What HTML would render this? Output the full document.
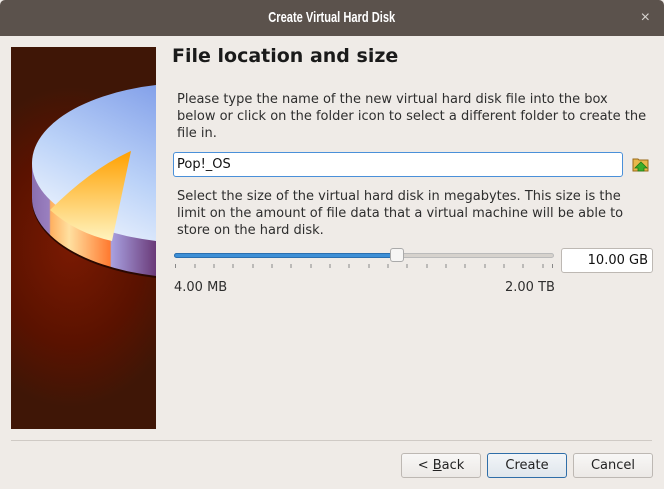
<!DOCTYPE html>
<html><head><meta charset="utf-8"><style>
*{margin:0;padding:0;box-sizing:border-box}
body{width:664px;height:489px;background:#efebe7;font-family:"DejaVu Sans","Liberation Sans",sans-serif;font-size:13px;color:#2e2e2e;position:relative;overflow:hidden}
.tb{position:absolute;left:0;top:0;width:664px;height:36px;background:#5b524c;color:#fff;font-family:"Liberation Sans",sans-serif;font-weight:bold;font-size:15px;text-align:center;line-height:35px;border-radius:5px 5px 0 0}
.tb span.t{display:inline-block;transform:scaleX(0.74)}
.x{position:absolute;right:14px;top:0;color:#d8d4d0;font-size:16px;font-weight:normal}
.img{position:absolute;left:11px;top:47px;width:145px;height:382px;overflow:hidden;background:radial-gradient(ellipse 120px 160px at 60px 200px,#7a1a02,#5a1200 60%,#3f1606 100%)}
.abs{position:absolute}
h1{position:absolute;left:172px;top:45px;font-size:19px;font-weight:bold;color:#1a1a1a}
.p{position:absolute;left:177px;line-height:17px;font-size:13px}
.inp{position:absolute;left:173px;top:152px;width:450px;height:25px;background:#fff;border:1px solid #4a90d9;border-radius:3px;padding-left:3px;line-height:23px;color:#111}
.btn{position:absolute;top:453px;height:25px;width:80px;border:1px solid #bdb8b3;border-radius:3px;background:linear-gradient(#f8f7f6,#ece9e6);text-align:center;line-height:23px;color:#222}
</style></head><body>
<div class="tb"><span class="t">Create Virtual Hard Disk</span><span class="x">×</span></div>
<div class="img">
<svg width="145" height="382" viewBox="0 0 145 382">
<defs>
<linearGradient id="top" x1="0" y1="1" x2="1" y2="0"><stop offset="0" stop-color="#ffffff"/><stop offset="0.35" stop-color="#bcd3f8"/><stop offset="1" stop-color="#4f72dc"/></linearGradient>
<linearGradient id="side" gradientUnits="userSpaceOnUse" x1="21" y1="0" x2="145" y2="0"><stop offset="0" stop-color="#8a6fb0"/><stop offset="0.14" stop-color="#9a80c0"/><stop offset="0.15" stop-color="#ffb060"/><stop offset="0.3" stop-color="#ffe0a0"/><stop offset="0.63" stop-color="#ff7a30"/><stop offset="0.64" stop-color="#a8a0e0"/><stop offset="1" stop-color="#6a3a78"/></linearGradient>
<linearGradient id="sl" x1="0" y1="0" x2="0" y2="1"><stop offset="0" stop-color="#ffa000"/><stop offset="1" stop-color="#fff4c0"/></linearGradient>
</defs>
<ellipse cx="181" cy="153" rx="160" ry="80" fill="#2a0800"/>
<path d="M21 116 L21 151 A160 80 0 0 0 181 231 L181 196 Z" fill="url(#side)"/>
<ellipse cx="181" cy="116" rx="160" ry="80" fill="url(#top)"/>
<path d="M120 104 L101 194 Q65 186 39 163 Q80 122 120 104Z" fill="url(#sl)"/>
</svg>
</div>
<h1>File location and size</h1>
<div class="p" style="top:91px">Please type the name of the new virtual hard disk file into the box<br>below or click on the folder icon to select a different folder to create the<br>file in.</div>
<div class="inp">Pop!_OS</div>
<svg class="abs" style="left:632px;top:156px" width="18" height="16" viewBox="0 0 18 16"><path d="M1 3h5l1 1h9v11H1z" fill="#e8b84a" stroke="#9a6a1a"/><path d="M9 6l6 6h-3v3H6v-3H3z" fill="#3cae2a" stroke="#1f7a14" stroke-width=".8"/></svg>
<div class="p" style="top:188px">Select the size of the virtual hard disk in megabytes. This size is the<br>limit on the amount of file data that a virtual machine will be able to<br>store on the hard disk.</div>
<div class="abs" style="left:174px;top:253px;width:380px;height:5px;border-radius:3px;background:#d6d2cd;border:1px solid #bbb"></div>
<div class="abs" style="left:174px;top:253px;width:225px;height:5px;border-radius:3px;background:#3d8fd6;border:1px solid #2a6fb0"></div>
<div class="abs" style="left:390px;top:248px;width:14px;height:14px;border-radius:3px;background:#f6f5f4;border:1px solid #aaa"></div>
<svg class="abs" style="left:174px;top:264px" width="384" height="6">
<g stroke="#888" stroke-width="1">
<line x1="1.5" y1="0" x2="1.5" y2="4"/><line x1="21" y1="0" x2="21" y2="4"/><line x1="40" y1="0" x2="40" y2="4"/><line x1="59" y1="0" x2="59" y2="4"/><line x1="79" y1="0" x2="79" y2="4"/><line x1="98" y1="0" x2="98" y2="4"/><line x1="117" y1="0" x2="117" y2="4"/><line x1="137" y1="0" x2="137" y2="4"/><line x1="156" y1="0" x2="156" y2="4"/><line x1="175" y1="0" x2="175" y2="4"/><line x1="195" y1="0" x2="195" y2="4"/><line x1="214" y1="0" x2="214" y2="4"/><line x1="233" y1="0" x2="233" y2="4"/><line x1="253" y1="0" x2="253" y2="4"/><line x1="272" y1="0" x2="272" y2="4"/><line x1="291" y1="0" x2="291" y2="4"/><line x1="311" y1="0" x2="311" y2="4"/><line x1="330" y1="0" x2="330" y2="4"/><line x1="349" y1="0" x2="349" y2="4"/><line x1="369" y1="0" x2="369" y2="4"/><line x1="378.5" y1="0" x2="378.5" y2="4"/>
</g></svg>
<div class="abs" style="left:561px;top:248px;width:92px;height:25px;background:#fff;border:1px solid #bdb8b3;border-radius:3px;text-align:right;padding-right:4px;line-height:23px;color:#111">10.00 GB</div>
<div class="abs" style="left:174px;top:280px">4.00 MB</div>
<div class="abs" style="left:505px;top:280px">2.00 TB</div>
<div class="abs" style="left:11px;top:440px;width:641px;height:1px;background:#cfcac5"></div>
<div class="btn" style="left:401px">&lt; <u>B</u>ack</div>
<div class="btn" style="left:487px;border-color:#2f6ea8;background:linear-gradient(#f2f5f8,#dfe6ec)">Create</div>
<div class="btn" style="left:573px">Cancel</div>
</body></html>
